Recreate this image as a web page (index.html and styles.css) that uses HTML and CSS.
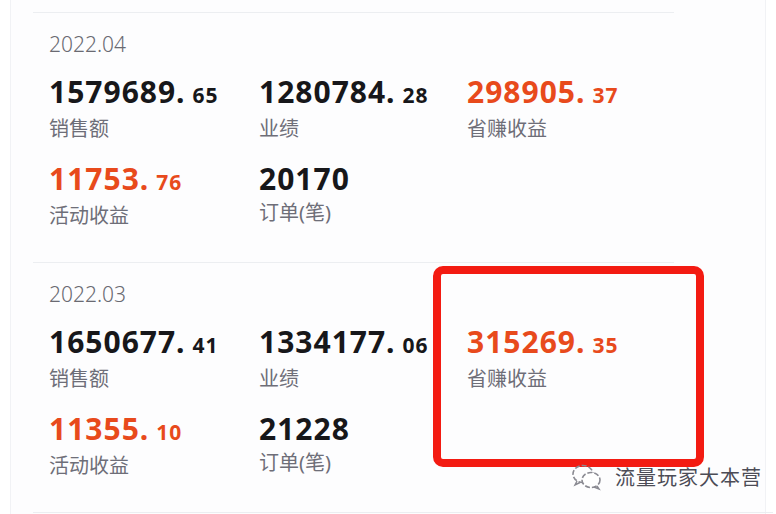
FILE: index.html
```html
<!DOCTYPE html>
<html lang="zh-CN">
<head>
    <meta charset="UTF-8">
    <meta name="viewport" content="width=device-width, initial-scale=1.0">
    <title>月度收益</title>
    <link rel="stylesheet" href="styles.css">
</head>
<body>

    <div class="page">
        <!-- 2022.04 -->
        <div class="month">
            <div class="month-date">2022.04</div>
            <div class="stats">
                <div class="stat">
                    <div class="stat-value">1579689.<span class="dec">65</span></div>
                    <div class="stat-label">销售额</div>
                </div>
                <div class="stat">
                    <div class="stat-value">1280784.<span class="dec">28</span></div>
                    <div class="stat-label">业绩</div>
                </div>
                <div class="stat">
                    <div class="stat-value hot">298905.<span class="dec">37</span></div>
                    <div class="stat-label">省赚收益</div>
                </div>
                <div class="stat">
                    <div class="stat-value hot">11753.<span class="dec">76</span></div>
                    <div class="stat-label">活动收益</div>
                </div>
                <div class="stat">
                    <div class="stat-value">20170</div>
                    <div class="stat-label">订单(笔)</div>
                </div>
            </div>
        </div>

        <!-- 2022.03 -->
        <div class="month">
            <div class="month-date">2022.03</div>
            <div class="stats">
                <div class="stat">
                    <div class="stat-value">1650677.<span class="dec">41</span></div>
                    <div class="stat-label">销售额</div>
                </div>
                <div class="stat">
                    <div class="stat-value">1334177.<span class="dec">06</span></div>
                    <div class="stat-label">业绩</div>
                </div>
                <div class="stat">
                    <div class="stat-value hot">315269.<span class="dec">35</span></div>
                    <div class="stat-label">省赚收益</div>
                </div>
                <div class="stat">
                    <div class="stat-value hot">11355.<span class="dec">10</span></div>
                    <div class="stat-label">活动收益</div>
                </div>
                <div class="stat">
                    <div class="stat-value">21228</div>
                    <div class="stat-label">订单(笔)</div>
                </div>
            </div>
        </div>

        <div class="month month-end"></div>

        <!-- annotation box -->
        <div class="mark-box"></div>

        <!-- watermark -->
        <div class="watermark">
            <svg class="wm-icon" width="32" height="28" viewBox="0 0 32 28">
                <ellipse cx="12" cy="11" rx="10" ry="8.5" fill="none" stroke="#8a8a92" stroke-width="1.6" stroke-dasharray="5 2"/>
                <ellipse cx="20" cy="17" rx="9" ry="7.5" fill="#fff" stroke="#8a8a92" stroke-width="1.6" stroke-dasharray="5 2"/>
                <path d="M6 18 L4 22 L9 19.5" fill="none" stroke="#8a8a92" stroke-width="1.4"/>
                <path d="M26 23 L28 26 L23 24" fill="none" stroke="#8a8a92" stroke-width="1.4"/>
            </svg>
            <span class="wm-text">流量玩家大本营</span>
        </div>
    </div>

</body>
</html>
```

FILE: styles.css
```css
/* General */
* {
    box-sizing: border-box;
    margin: 0;
    padding: 0;
}

body {
    font-family: "Noto Sans", "Noto Sans CJK SC", sans-serif;
    background: #fff;
    overflow: hidden;
}

.page {
    position: relative;
    height: 514px;
    margin: 0 10px;
    padding: 12px 0 0 22px;
    border-left: 1px solid #f1f2f5;
    border-right: 1px solid #f1f2f5;
    background: #fdfdfe;
}

/* Month block */
.month {
    width: 641px;
    height: 250px;
    padding: 17px 0 0 16px;
    border-top: 1px solid #eceef1;
}

.month-end {
    height: 2px;
    width: 740px;
}

.month-date {
    font-size: 21px;
    line-height: 28px;
    font-weight: 300;
    color: #6a6a72;
}

/* Stats grid */
.stats {
    display: grid;
    grid-template-columns: 210px 208px 1fr;
    row-gap: 19px;
    margin-top: 16px;
}

.stat-value {
    font-size: 30px;
    line-height: 36px;
    font-weight: 700;
    color: #17171a;
    letter-spacing: 1px;
    white-space: nowrap;
}

.stat-value .dec {
    font-size: 21px;
    margin-left: 7px;
    letter-spacing: 1px;
}

.stat-value.hot {
    color: #e84a1c;
}

.stat-label {
    margin-top: 2px;
    font-size: 20px;
    line-height: 27px;
    color: #6e6e78;
}

/* Red annotation */
.mark-box {
    position: absolute;
    left: 422px;
    top: 266px;
    width: 271px;
    height: 201px;
    border: 8px solid #f31b12;
    border-radius: 10px;
}

/* Watermark */
.watermark {
    position: absolute;
    left: 560px;
    top: 463px;
    display: flex;
    align-items: center;
    gap: 12px;
}

.wm-text {
    font-family: "Noto Sans CJK SC", sans-serif;
    font-size: 20px;
    line-height: 28px;
    color: #4c4c56;
    letter-spacing: 1px;
    text-shadow: 1px 1px 0 #fff;
}
```
